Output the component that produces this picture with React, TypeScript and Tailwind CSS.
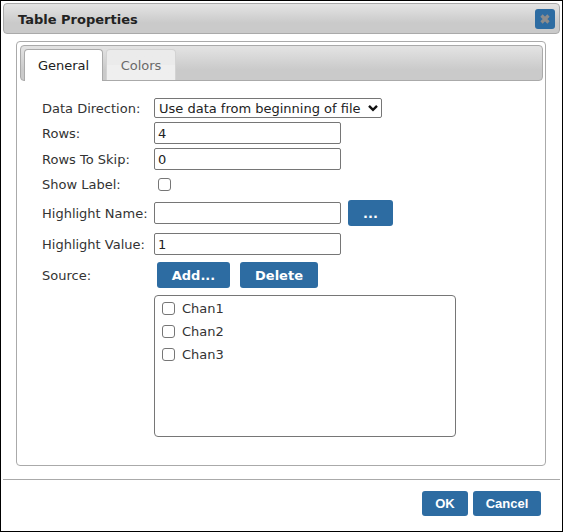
import { useState } from "react";
import type { ReactNode } from "react";

const boxClass =
  "h-[22px] w-[187px] rounded-[2px] border border-[#767676] bg-white px-[3px] text-[#222] outline-none";
const buttonClass = "rounded-[3px] bg-[#2d6ca2] font-bold text-white";
const checkClass =
  "block size-[13px] shrink-0 appearance-none rounded-[3px] border border-[#767676] bg-white checked:bg-[#2d6ca2]";

function Row({
  label,
  id,
  height,
  children,
}: {
  label: string;
  id?: string;
  height: string;
  children: ReactNode;
}) {
  return (
    <div className={`flex items-center ${height}`}>
      {id ? (
        <label htmlFor={id} className="w-[112px] shrink-0 pt-0.5 whitespace-nowrap">
          {label}
        </label>
      ) : (
        <span className="w-[112px] shrink-0 pt-0.5">{label}</span>
      )}
      {children}
    </div>
  );
}

export default function App() {
  const [tab, setTab] = useState("general");
  const channels = ["Chan1", "Chan2", "Chan3"];

  return (
    <div className="border border-black bg-white p-0.5 font-['Verdana','DejaVu_Sans',sans-serif] text-[13px] leading-4 text-[#333]">
      <header className="flex h-[31px] items-center justify-between rounded-[4px] border border-[#aaa] bg-linear-to-b from-[#e2e2e2] from-5% via-[#cacaca] via-65% to-[#cacaca] pr-1 pl-3.5">
        <h1 className="pt-0.5 font-bold text-[#222]">Table Properties</h1>
        <button
          type="button"
          aria-label="Close"
          className="flex size-5 items-center justify-center rounded-[3px] bg-[#2d6ca2]"
        >
          <svg viewBox="0 0 10 10" className="size-[10px]">
            <path d="M1.5 1.5 8.5 8.5M8.5 1.5 1.5 8.5" stroke="#8c8c8c" strokeWidth="3.2" />
          </svg>
        </button>
      </header>

      <main className="mt-[7px] mr-3.5 ml-[13px] rounded-[4px] border border-[#aaa] p-[3px] pr-0.5 pb-[28px]">
        <div
          role="tablist"
          className="flex h-9 items-start gap-[3px] rounded-[4px] border border-[#aaa] bg-linear-to-b from-[#e2e2e2] from-5% via-[#cacaca] via-70% to-[#cacaca] pt-[3px] pl-[3px]"
        >
          <button
            type="button"
            role="tab"
            aria-selected={tab === "general"}
            onClick={() => setTab("general")}
            className="h-8 w-[79px] rounded-t-[4px] border border-b-0 border-[#aaa] bg-white text-center text-[#212121]"
          >
            General
          </button>
          <button
            type="button"
            role="tab"
            aria-selected={tab === "colors"}
            onClick={() => setTab("colors")}
            className="h-[31px] w-[70px] rounded-t-[4px] border border-b-0 border-[#d3d3d3] bg-linear-to-b from-[#ebebeb] from-50% to-[#efefef] to-50% pt-0.5 text-center text-[#6a6a6a]"
          >
            Colors
          </button>
        </div>

        <form className="pt-[15px] pl-[22px]" onSubmit={(e) => e.preventDefault()}>
          <Row label="Data Direction:" id="direction" height="h-6">
            <div className="relative">
              <select
                id="direction"
                className="block h-5 w-[228px] appearance-none rounded-[2px] border border-[#767676] bg-white pt-px pl-1 text-[#222]"
              >
                <option>Use data from beginning of file</option>
                <option>Use data from end of file</option>
              </select>
              <svg
                viewBox="0 0 10 8"
                className="pointer-events-none absolute top-1.5 right-1 h-2 w-2.5"
              >
                <path d="M1 1.8 5 5.8 9 1.8" fill="none" stroke="#111" strokeWidth="2.4" />
              </svg>
            </div>
          </Row>
          <Row label="Rows:" id="rows" height="h-[26px]">
            <input id="rows" type="text" defaultValue="4" className={boxClass} />
          </Row>
          <Row label="Rows To Skip:" id="skip" height="h-[26px]">
            <input id="skip" type="text" defaultValue="0" className={boxClass} />
          </Row>
          <Row label="Show Label:" id="show" height="h-6">
            <input id="show" type="checkbox" className={`ml-1 ${checkClass}`} />
          </Row>
          <Row label="Highlight Name:" id="name" height="h-[34px]">
            <input id="name" type="text" className={boxClass} />
            <button
              type="button"
              aria-label="Browse"
              className={`ml-[7px] h-[26px] w-[45px] pt-0.5 ${buttonClass}`}
            >
              ...
            </button>
          </Row>
          <Row label="Highlight Value:" id="value" height="h-7">
            <input id="value" type="text" defaultValue="1" className={boxClass} />
          </Row>
          <Row label="Source:" height="h-[34px]">
            <div className="ml-[3px] flex gap-2.5">
              <button type="button" className={`h-[26px] w-[73px] pt-0.5 ${buttonClass}`}>
                Add...
              </button>
              <button type="button" className={`h-[26px] w-[78px] pt-0.5 ${buttonClass}`}>
                Delete
              </button>
            </div>
          </Row>
          <ul className="mt-[3px] ml-[112px] h-[142px] w-[302px] rounded-[4px] border border-[#767676] pt-px pl-[7px]">
            {channels.map((name) => (
              <li key={name}>
                <label className="flex h-[23px] items-center gap-[7px]">
                  <input type="checkbox" className={checkClass} />
                  {name}
                </label>
              </li>
            ))}
          </ul>
        </form>
      </main>

      <footer className="mt-[13px] flex justify-end gap-[5px] border-t border-[#aaa] pt-[11px] pr-[19px] pb-[13px] font-['Liberation_Sans',Arial,sans-serif]">
        <button type="button" className={`h-[25px] w-[46px] ${buttonClass}`}>
          OK
        </button>
        <button type="button" className={`h-[25px] w-[68px] ${buttonClass}`}>
          Cancel
        </button>
      </footer>
    </div>
  );
}
